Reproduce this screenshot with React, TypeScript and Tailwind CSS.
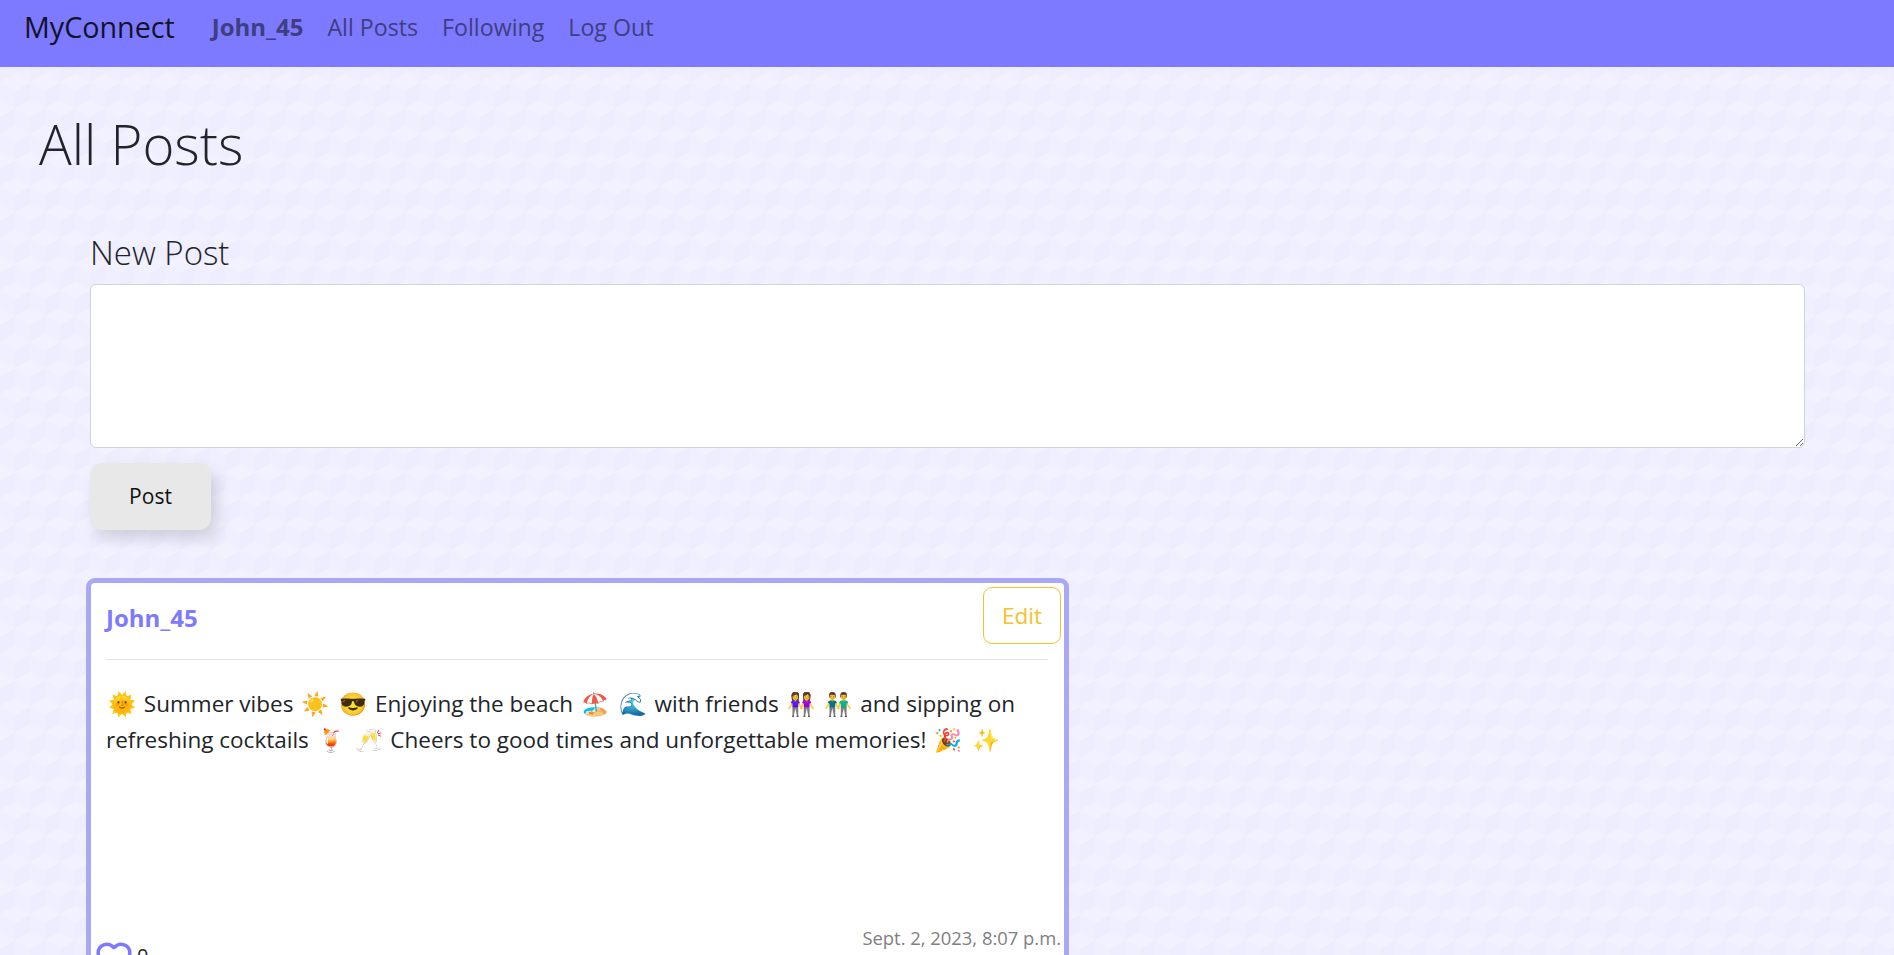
import type { ReactNode } from 'react';
import { Heart } from 'lucide-react';

// ref's emoji sit further from the words than the fallback font's do
function Emoji({ children }: { children: ReactNode }) {
  return <span className="mx-[2px]">{children}</span>;
}

export default function App() {
  return (
    <div className="h-[955px] overflow-hidden bg-[#f0efff] bg-[url('data:image/svg+xml,%3Csvg%20xmlns=%22http://www.w3.org/2000/svg%22%20width=%2230%22%20height=%2252%22%3E%3Cpath%20fill=%22%23eeedff%22%20d=%22M0,0L15-8.66V8.66L0,17.32ZM15,26L30,17.34V34.66L15,43.32ZM0,52L15,43.34V60.66L0,69.32Z%22/%3E%3Cpath%20fill=%22%23f2f1ff%22%20d=%22M0,0L15-8.66L0-17.32L-15-8.66ZM30,0L45-8.66L30-17.32L15-8.66ZM15,26L30,17.34L15,8.66L0,17.34ZM0,52L15,43.34L0,34.68L-15,43.34ZM30,52L45,43.34L30,34.68L15,43.34Z%22/%3E%3C/svg%3E')] bg-[position:0_13px] font-['Open_Sans',sans-serif] text-[#212529]">
      <nav className="flex h-[67px] items-start bg-[#7d7aff] pl-6 pt-[7px]">
        <a className="mr-[37px] text-[28.7px] leading-[40px] text-[#12122a]">MyConnect</a>
        <ul className="flex gap-6 pt-[3px] text-[23.2px] leading-[34px] text-[#3f3e80]">
          <li className="text-[24px] font-bold">John_45</li>
          <li>All Posts</li>
          <li>Following</li>
          <li>Log Out</li>
        </ul>
      </nav>

      <main>
        <h1 className="ml-[39px] mt-[39px] text-[54.5px] font-light leading-[76px]">All Posts</h1>

        <form className="ml-[90px] mt-[47px] w-[1715px]">
          <label className="block text-[33px] font-light leading-[48px]">New Post</label>
          <textarea className="mt-[7px] block h-[164px] w-full rounded-[6px] border border-[#ced4da] bg-white" />
          <button
            type="button"
            className="mt-[15px] h-[67px] w-[121px] rounded-[12px] bg-[#e8e8e8] text-[21px] text-[#111] shadow-[6px_8px_16px_rgba(0,0,0,0.14)]"
          >
            Post
          </button>
        </form>

        <article className="ml-[86px] mt-[48px] h-[500px] w-[983px] rounded-[9px] border-[5px] border-[#aaa8f5] bg-white pl-[15px] pr-[16px]">
          <header className="flex h-[77px] items-start justify-between border-b-[1.5px] border-[#e3e3e3] pt-[4px]">
            <div className="pt-[13px] text-[24px] font-bold leading-[36px] text-[#7d7aff]">John_45</div>
            <button
              type="button"
              className="-mr-[13px] h-[57px] w-[78px] rounded-[9px] border-[1.5px] border-[#f5c22b] text-[22.5px] text-[#f5c22b]"
            >
              Edit
            </button>
          </header>
          <p className="h-[275px] pt-[26px] text-[22.5px] leading-[36px]">
            <Emoji>🌞</Emoji> Summer vibes <Emoji>☀️</Emoji> <Emoji>😎</Emoji> Enjoying the beach <Emoji>🏖️</Emoji>{' '}
            <Emoji>🌊</Emoji> with friends <Emoji>👭</Emoji> <Emoji>👬</Emoji> and sipping on
            <br />
            refreshing cocktails <Emoji>🍹</Emoji> <Emoji>🥂</Emoji> Cheers to good times and unforgettable memories!{' '}
            <Emoji>🎉</Emoji> <Emoji>✨</Emoji>
          </p>
          <footer className="-ml-[11px] -mr-[13px] flex items-start justify-between">
            <div className="flex">
              <Heart className="mt-[3px] h-[38px] w-[38px] text-[#7d7aff]" strokeWidth={2.2} />
              <span className="ml-[4px] mt-[6px] text-[20px] leading-[30px]">0</span>
            </div>
            <time className="-mt-[12px] text-[18.4px] leading-[30px] text-[#808080]">Sept. 2, 2023, 8:07 p.m.</time>
          </footer>
        </article>
      </main>
    </div>
  );
}
